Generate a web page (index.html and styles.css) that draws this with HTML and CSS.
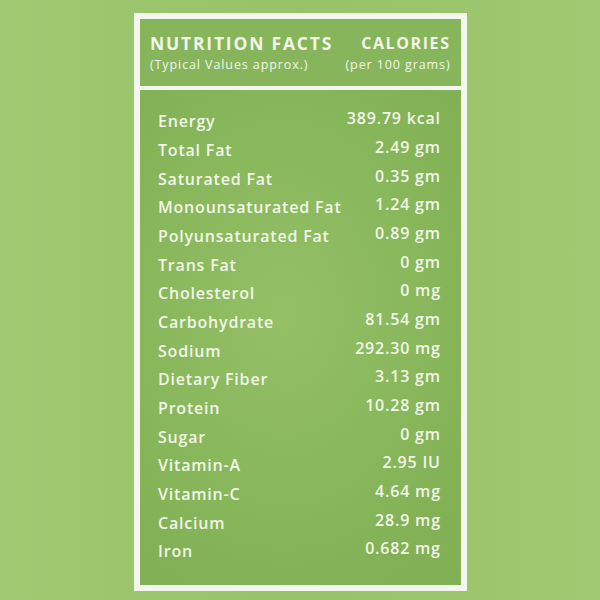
FILE: index.html
```html
<!DOCTYPE html>
<html>
<head>
<meta charset="utf-8">
<link rel="stylesheet" href="styles.css">
</head>
<body>
<div class="page">
  <div class="card">
    <div class="head">
      <div class="head-left">
        <div class="title">NUTRITION FACTS</div>
        <div class="sub">(Typical Values approx.)</div>
      </div>
      <div class="head-right">
        <div class="title">CALORIES</div>
        <div class="sub">(per 100 grams)</div>
      </div>
    </div>
    <div class="rule"></div>
    <div class="body">
      <div class="row"><span>Energy</span><span class="val">389.79 kcal</span></div>
      <div class="row"><span>Total Fat</span><span class="val">2.49 gm</span></div>
      <div class="row"><span>Saturated Fat</span><span class="val">0.35 gm</span></div>
      <div class="row"><span>Monounsaturated Fat</span><span class="val">1.24 gm</span></div>
      <div class="row"><span>Polyunsaturated Fat</span><span class="val">0.89 gm</span></div>
      <div class="row"><span>Trans Fat</span><span class="val">0 gm</span></div>
      <div class="row"><span>Cholesterol</span><span class="val">0 mg</span></div>
      <div class="row"><span>Carbohydrate</span><span class="val">81.54 gm</span></div>
      <div class="row"><span>Sodium</span><span class="val">292.30 mg</span></div>
      <div class="row"><span>Dietary Fiber</span><span class="val">3.13 gm</span></div>
      <div class="row"><span>Protein</span><span class="val">10.28 gm</span></div>
      <div class="row"><span>Sugar</span><span class="val">0 gm</span></div>
      <div class="row"><span>Vitamin-A</span><span class="val">2.95 IU</span></div>
      <div class="row"><span>Vitamin-C</span><span class="val">4.64 mg</span></div>
      <div class="row"><span>Calcium</span><span class="val">28.9 mg</span></div>
      <div class="row"><span>Iron</span><span class="val">0.682 mg</span></div>
    </div>
  </div>
</div>
</body>
</html>
```
FILE: styles.css
```css
html, body {
  margin: 0;
  padding: 0;
}
body {
  width: 600px;
  height: 600px;
  overflow: hidden;
  background: #9dc76f;
  font-family: "Open Sans", "DejaVu Sans", sans-serif;
  color: #f1f6e8;
}
.page {
  width: 600px;
  height: 600px;
  padding-top: 13px;
  box-sizing: border-box;
  display: flex;
  justify-content: center;
  background: linear-gradient(90deg, #a0c973 0%, #9cc66e 20%, #98c26a 50%, #9cc66e 80%, #a0c973 100%);
}
.card {
  width: 333px;
  height: 578px;
  box-sizing: border-box;
  margin-left: 1px;
  border: 6px solid #f4f7ee;
  display: flex;
  flex-direction: column;
  background: #f4f7ee;
}
.head {
  height: 67px;
  flex: none;
  display: flex;
  justify-content: space-between;
  padding: 14px 12px 0 10px;
  box-sizing: border-box;
  background: #87b55b;
}
.head-right {
  text-align: right;
}
.title {
  font-size: 17.5px;
  font-weight: 700;
  line-height: 20px;
  letter-spacing: 1.8px;
  margin-right: -1.8px;
}
.head-right .title {
  font-size: 16px;
  letter-spacing: 1.6px;
  margin-right: -1.6px;
}
.sub {
  font-size: 12.5px;
  line-height: 18px;
  margin-top: 3px;
  letter-spacing: 0.9px;
}
.head-right .sub {
  margin-right: -1.5px;
}
.rule {
  height: 4px;
  flex: none;
}
.body {
  flex: 1;
  padding: 17px 21px 0 18px;
  background: radial-gradient(ellipse 70% 60% at 45% 45%, #94c066 0%, #89b75c 60%, #82b055 100%);
}
.row {
  display: flex;
  justify-content: space-between;
  height: 28.67px;
  align-items: center;
  font-size: 16px;
  font-weight: 600;
  letter-spacing: 0.8px;
}
.val {
  position: relative;
  top: -3px;
  margin-right: -0.8px;
}
```
